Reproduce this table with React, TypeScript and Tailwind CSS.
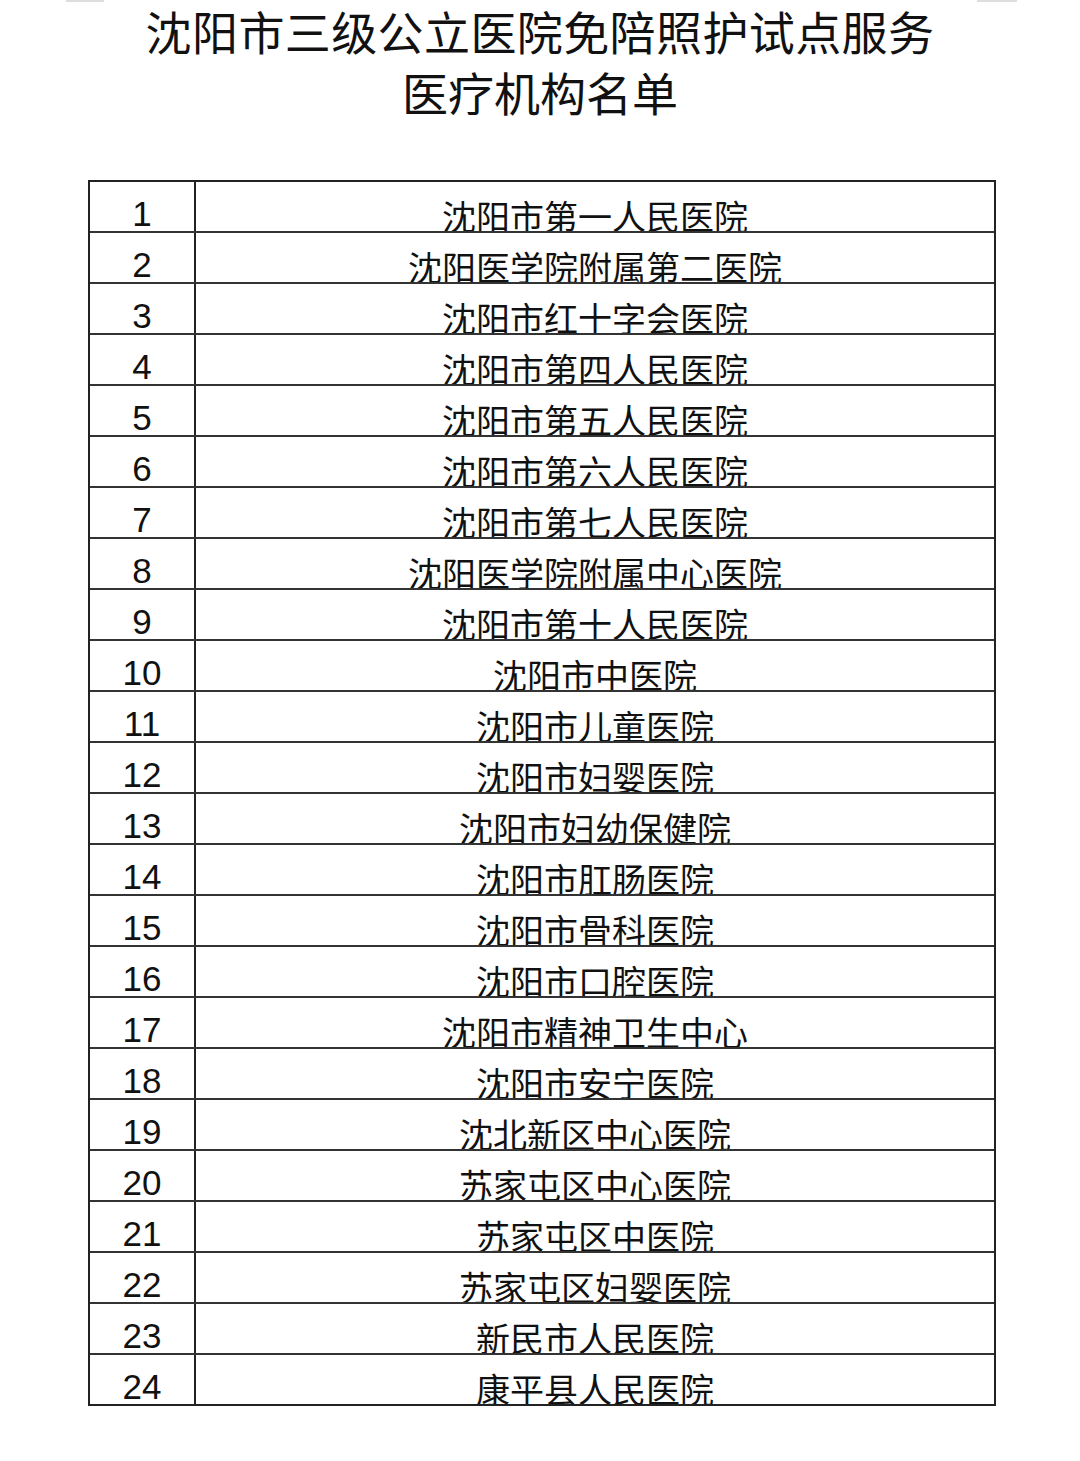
const HOSPITALS = [
  "沈阳市第一人民医院",
  "沈阳医学院附属第二医院",
  "沈阳市红十字会医院",
  "沈阳市第四人民医院",
  "沈阳市第五人民医院",
  "沈阳市第六人民医院",
  "沈阳市第七人民医院",
  "沈阳医学院附属中心医院",
  "沈阳市第十人民医院",
  "沈阳市中医院",
  "沈阳市儿童医院",
  "沈阳市妇婴医院",
  "沈阳市妇幼保健院",
  "沈阳市肛肠医院",
  "沈阳市骨科医院",
  "沈阳市口腔医院",
  "沈阳市精神卫生中心",
  "沈阳市安宁医院",
  "沈北新区中心医院",
  "苏家屯区中心医院",
  "苏家屯区中医院",
  "苏家屯区妇婴医院",
  "新民市人民医院",
  "康平县人民医院",
];

export default function App() {
  return (
    <div className="relative w-[1080px] min-h-[1461px] bg-white text-[#111]">
      {/* faint scan marks at the top edge */}
      <div className="absolute left-[66px] top-0 h-[2px] w-[38px] bg-[#ddd]" />
      <div className="absolute left-[977px] top-0 h-[2px] w-[40px] bg-[#ddd]" />

      <div className="flex flex-col items-center font-['Noto_Sans_CJK_SC',sans-serif]">
        <div className="whitespace-nowrap text-[46px] leading-[61px] tracking-[0.4px]">
          沈阳市三级公立医院免陪照护试点服务
        </div>
        <div className="whitespace-nowrap text-[46px] leading-[61px]">
          医疗机构名单
        </div>
      </div>

      <div className="ml-[88px] mt-[58px] w-[908px] border-2 border-[#222]">
        {HOSPITALS.map((name, i) => (
          <div
            key={name}
            className={
              i === 0
                ? "flex h-[49px]"
                : "flex h-[51px] border-t-2 border-[#333]"
            }
          >
            <div className="flex w-[106px] shrink-0 items-end justify-center border-r-2 border-[#222] text-[35px] leading-[35px] font-['Liberation_Sans',Arial,sans-serif]">
              {i + 1}
            </div>
            <div className="flex flex-1 items-end justify-center overflow-hidden">
              <span className="mb-[-2px] text-[34px] leading-none font-['Noto_Sans_CJK_SC',sans-serif] whitespace-nowrap">
                {name}
              </span>
            </div>
          </div>
        ))}
      </div>
    </div>
  );
}
